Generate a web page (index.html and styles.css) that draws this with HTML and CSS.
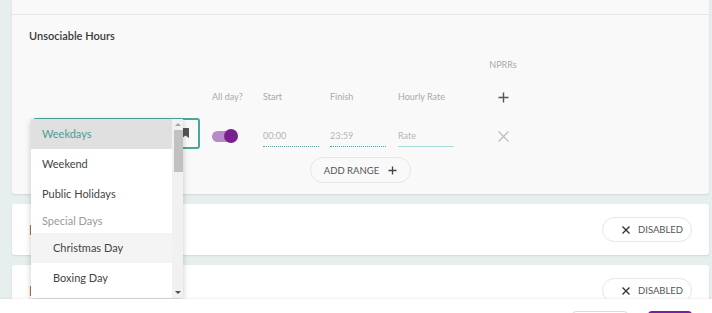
FILE: index.html
```html
<!DOCTYPE html>
<html lang="en">
<head>
<meta charset="UTF-8">
<title>Unsociable Hours</title>
<link rel="stylesheet" href="styles.css">
</head>
<body>
<div class="page">
    <div class="card card-open">
        <div class="card-head"></div>
        <div class="card-body">
            <h3 class="title">Unsociable Hours</h3>

            <div class="row row-top">
                <div></div><div></div><div></div><div></div><div></div>
                <div class="label center">NPRRs</div>
            </div>

            <div class="row row-labels">
                <div></div>
                <div class="label">All day?</div>
                <div class="label">Start</div>
                <div class="label">Finish</div>
                <div class="label">Hourly Rate</div>
                <div class="center">
                    <svg class="icon-plus" width="11" height="11" viewBox="0 0 11 11"><path d="M5.5 0.5v10M0.5 5.5h10" stroke="#555" stroke-width="1.4"/></svg>
                </div>
            </div>

            <div class="row row-inputs">
                <div class="select-cell">
                    <div class="select">
                        <svg class="select-icon" width="9" height="12" viewBox="0 0 9 12"><path d="M1 1h7v10l-3.5-2.5L1 11z" fill="#555"/></svg>
                    </div>
                    <div class="dropdown">
                        <ul class="options">
                            <li class="option selected">Weekdays</li>
                            <li class="option">Weekend</li>
                            <li class="option">Public Holidays</li>
                            <li class="group">Special Days</li>
                            <li class="option sub hover">Christmas Day</li>
                            <li class="option sub">Boxing Day</li>
                        </ul>
                        <div class="scrollbar">
                            <span class="arrow-up"></span>
                            <span class="thumb"></span>
                            <span class="arrow-down"></span>
                        </div>
                    </div>
                </div>
                <div class="toggle-cell">
                    <span class="toggle"><span class="knob"></span></span>
                </div>
                <div><div class="field dotted">00:00</div></div>
                <div><div class="field dotted">23:59</div></div>
                <div><div class="field solid">Rate</div></div>
                <div class="center remove">
                    <svg width="11" height="11" viewBox="0 0 11 11"><path d="M0.5 0.5l10 10M10.5 0.5l-10 10" stroke="#bbb" stroke-width="1.1"/></svg>
                </div>
            </div>

            <div class="add-wrap">
                <button class="pill add-range">ADD RANGE
                    <svg width="9" height="9" viewBox="0 0 9 9"><path d="M4.5 0.5v8M0.5 4.5h8" stroke="#444" stroke-width="1.3"/></svg>
                </button>
            </div>
        </div>
    </div>

    <div class="card card-closed">
        <span class="card-title">I</span>
        <button class="pill">
            <svg width="8" height="8" viewBox="0 0 8 8"><path d="M0.5 0.5l7 7M7.5 0.5l-7 7" stroke="#333" stroke-width="1.4"/></svg>
            DISABLED
        </button>
    </div>

    <div class="card card-closed">
        <span class="card-title">I</span>
        <button class="pill">
            <svg width="8" height="8" viewBox="0 0 8 8"><path d="M0.5 0.5l7 7M7.5 0.5l-7 7" stroke="#333" stroke-width="1.4"/></svg>
            DISABLED
        </button>
    </div>
</div>

<footer class="footer">
    <button class="btn btn-outline" aria-label="Cancel"></button>
    <button class="btn btn-primary" aria-label="Save"></button>
</footer>
</body>
</html>
```

FILE: styles.css
```css
html, body {
    margin: 0;
    height: 313px;
    overflow: hidden;
}
body {
    background: #e7efee;
    font-family: Lato, "Noto Sans", sans-serif;
    color: #333;
}
.page {
    padding: 0 3px 0 12px;
}

.card {
    background: #fff;
    border-radius: 3px;
    box-shadow: 0 1px 2px rgba(0, 0, 0, 0.1);
    margin-bottom: 10px;
}
.card-open {
    background: #f9f9f9;
    border-radius: 0 0 3px 3px;
}
.card-head {
    height: 14px;
    border-bottom: 1px solid #e6e6e6;
}
.card-body {
    padding: 14px 0 11px 0;
}
.title {
    margin: 0 0 0 17px;
    font-size: 11px;
    line-height: 14px;
    font-weight: 600;
    color: #3a3a3a;
}

.row {
    display: grid;
    grid-template-columns: 179px 51px 67px 68px 80px 50px;
    padding-left: 21px;
    align-items: center;
}
.row-top {
    margin-top: 16px;
    height: 12px;
}
.row-labels {
    margin-top: 19px;
    height: 12px;
}
.row-inputs {
    margin-top: 16px;
    height: 31px;
}
.label {
    font-size: 9px;
    line-height: 12px;
    color: #a9a9a9;
}
.center {
    display: flex;
    justify-content: center;
    align-items: center;
}
.icon-plus {
    margin-top: 2px;
}
.remove {
    padding-top: 6px;
}

.select-cell {
    position: relative;
    height: 31px;
}
.select {
    width: 163px;
    height: 27px;
    border: 2px solid #4aa79c;
    border-radius: 3px;
    position: relative;
}
.select-icon {
    position: absolute;
    right: 8px;
    top: 7px;
}
.dropdown {
    position: absolute;
    left: -2px;
    top: 1px;
    width: 152px;
    height: 179px;
    background: #fff;
    box-shadow: 0 2px 6px rgba(0, 0, 0, 0.22);
    display: flex;
    z-index: 5;
}
.options {
    list-style: none;
    margin: 0;
    padding: 0;
    flex: 1;
}
.option {
    height: 30px;
    line-height: 30px;
    padding-left: 11px;
    font-size: 11px;
    color: #444;
}
.option.selected {
    background: #e0e0e0;
    color: #4a9e96;
}
.option.sub {
    padding-left: 22px;
}
.option.hover {
    background: #f4f4f4;
}
.group {
    height: 24px;
    line-height: 24px;
    padding-left: 11px;
    font-size: 11px;
    color: #9a9a9a;
}
.scrollbar {
    width: 11px;
    background: #f1f1f1;
    position: relative;
}
.thumb {
    position: absolute;
    left: 2px;
    right: 0;
    top: 11px;
    height: 42px;
    background: #c1c1c1;
}
.arrow-up, .arrow-down {
    position: absolute;
    left: 3px;
    width: 0;
    height: 0;
    border-left: 3px solid transparent;
    border-right: 3px solid transparent;
}
.arrow-up {
    top: 4px;
    border-bottom: 3px solid #a3a3a3;
}
.arrow-down {
    bottom: 4px;
    border-top: 3px solid #505050;
}

.toggle-cell {
    display: flex;
    align-items: center;
    padding-top: 5px;
}
.toggle {
    display: block;
    position: relative;
    width: 23px;
    height: 11px;
    border-radius: 6px;
    background: #b88ac8;
}
.knob {
    position: absolute;
    left: 12px;
    top: -2px;
    width: 14px;
    height: 14px;
    border-radius: 50%;
    background: #7a1f8e;
}

.field {
    width: 56px;
    margin-top: 7px;
    font-size: 9px;
    line-height: 16px;
    padding-bottom: 2px;
    color: #b5b5b5;
}
.dotted {
    border-bottom: 1px dotted #4aa79c;
}
.solid {
    border-bottom: 1px solid #a9dad4;
}

.add-wrap {
    display: flex;
    justify-content: center;
    margin-top: 8px;
}
.pill {
    display: flex;
    align-items: center;
    gap: 8px;
    height: 26px;
    padding: 0 12px;
    border: 1px solid #e6e6e6;
    border-radius: 13px;
    background: transparent;
    font-family: Lato, "Noto Sans", sans-serif;
    font-size: 9.5px;
    color: #555;
}
.add-range {
    width: 101px;
    justify-content: center;
    gap: 9px;
}

.card-closed {
    height: 51px;
    display: flex;
    align-items: center;
    justify-content: space-between;
    padding: 0 17px;
}
.card-closed .pill {
    width: 90px;
    height: 25px;
    padding: 0 0 0 19px;
    gap: 8px;
    background: #fff;
}
.card-title {
    font-size: 13px;
    color: #555;
    opacity: 0.99;
}

.footer {
    position: fixed;
    left: 0;
    right: 0;
    top: 299px;
    height: 40px;
    background: #fff;
    box-shadow: 0 -1px 2px rgba(0, 0, 0, 0.06);
    display: flex;
    justify-content: flex-end;
    align-items: flex-start;
    gap: 20px;
    padding: 12px 20px 0 0;
    z-index: 10;
}
.btn {
    height: 26px;
    border-radius: 4px;
}
.btn-outline {
    width: 56px;
    border: 1px solid #dcdcdc;
    background: #fff;
}
.btn-primary {
    width: 44px;
    border: 0;
    border-top: 2px solid #7b1fa2;
    background: #fff;
}
```
